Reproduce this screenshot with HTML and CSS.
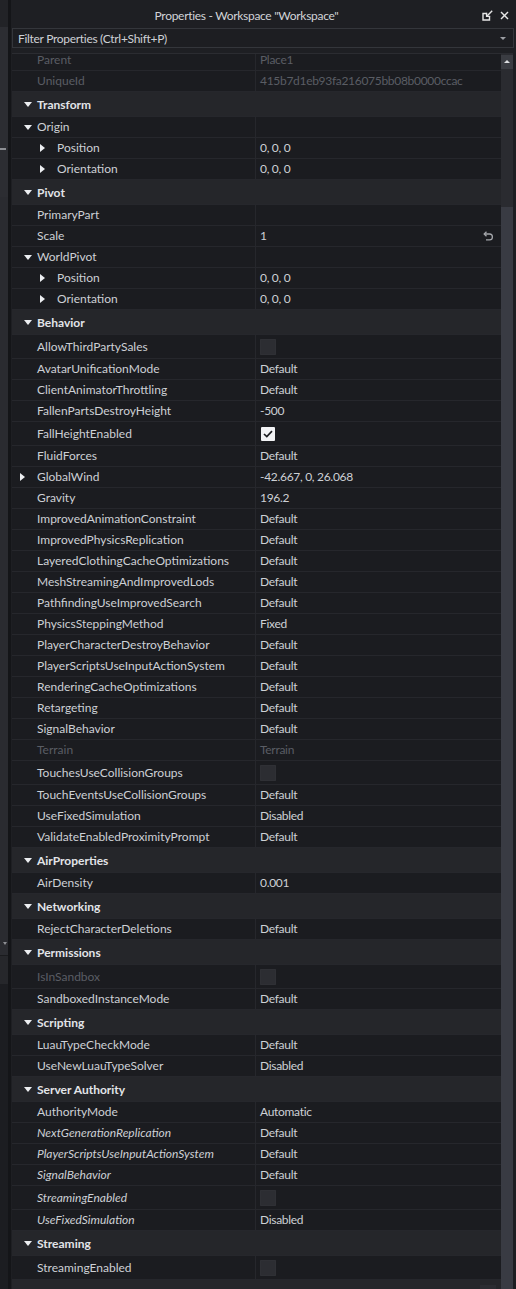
FILE: index.html
```html
<!DOCTYPE html>
<html lang="en">
<head>
  <meta charset="UTF-8" />
  <title>Properties</title>
  <link rel="stylesheet" href="styles.css">
</head>
<body>
  <div class="app">
    <!-- edge of the neighbouring dock panel -->
    <div class="side">
      <div class="side-top"></div>
      <div class="side-box"><span class="side-mark"></span></div>
      <div class="side-mid"><span class="side-arrow"></span></div>
      <div class="side-band"></div>
      <div class="side-rest"></div>
    </div>
    <div class="divider"></div>

    <div class="panel">
      <div class="titlebar">
        <span class="title">Properties - Workspace "Workspace"</span>
        <div class="title-btns">
          <svg width="11" height="11" viewBox="0 0 11 11" fill="none" stroke="#e6e6e6" stroke-width="1.4">
            <polyline points="4.5,3.5 1,3.5 1,10 7.5,10 7.5,6.5" />
            <line x1="10.2" y1="0.8" x2="4.6" y2="6.4" />
            <polyline points="4.6,2.8 4.6,6.4 8.2,6.4" />
          </svg>
          <svg width="9" height="9" viewBox="0 0 9 9" stroke="#e6e6e6" stroke-width="1.4">
            <line x1="1" y1="1" x2="8" y2="8" />
            <line x1="8" y1="1" x2="1" y2="8" />
          </svg>
        </div>
      </div>

      <div class="filter">
        <span>Filter Properties (Ctrl+Shift+P)</span>
        <span class="drop"></span>
      </div>

      <div class="body">
        <div class="grid">
          <div class="list">
            <div class="row off"><div class="name">Parent</div><div class="val">Place1</div></div>
            <div class="row off"><div class="name">UniqueId</div><div class="val">415b7d1eb93fa216075bb08b0000ccac</div></div>

            <div class="cat"><span class="caret down"></span>Transform</div>
            <div class="row"><div class="name"><span class="caret down"></span>Origin</div><div class="val"></div></div>
            <div class="row"><div class="name sub"><span class="caret right"></span>Position</div><div class="val">0, 0, 0</div></div>
            <div class="row"><div class="name sub"><span class="caret right"></span>Orientation</div><div class="val">0, 0, 0</div></div>

            <div class="cat"><span class="caret down"></span>Pivot</div>
            <div class="row"><div class="name">PrimaryPart</div><div class="val"></div></div>
            <div class="row">
              <div class="name">Scale</div>
              <div class="val">1
                <svg class="reset" width="11" height="10" viewBox="0 0 11 10" fill="none" stroke="#a4a6ab" stroke-width="1.3">
                  <polyline points="3.5,0.8 1.2,3 3.5,5.2" />
                  <path d="M1.2 3 H6.5 A2.9 2.9 0 0 1 6.5 8.8 H3" />
                </svg>
              </div>
            </div>
            <div class="row"><div class="name"><span class="caret down"></span>WorldPivot</div><div class="val"></div></div>
            <div class="row"><div class="name sub"><span class="caret right"></span>Position</div><div class="val">0, 0, 0</div></div>
            <div class="row"><div class="name sub"><span class="caret right"></span>Orientation</div><div class="val">0, 0, 0</div></div>

            <div class="cat"><span class="caret down"></span>Behavior</div>
            <div class="row tall"><div class="name">AllowThirdPartySales</div><div class="val"><span class="box"></span></div></div>
            <div class="row"><div class="name">AvatarUnificationMode</div><div class="val">Default</div></div>
            <div class="row"><div class="name">ClientAnimatorThrottling</div><div class="val">Default</div></div>
            <div class="row"><div class="name">FallenPartsDestroyHeight</div><div class="val">-500</div></div>
            <div class="row tall">
              <div class="name">FallHeightEnabled</div>
              <div class="val">
                <span class="box on">
                  <svg width="10" height="8" viewBox="0 0 10 8" fill="none" stroke="#1b1c20" stroke-width="1.7">
                    <polyline points="1,4 3.8,6.6 9,1.2" />
                  </svg>
                </span>
              </div>
            </div>
            <div class="row"><div class="name">FluidForces</div><div class="val">Default</div></div>
            <div class="row"><div class="name"><span class="caret right"></span>GlobalWind</div><div class="val">-42.667, 0, 26.068</div></div>
            <div class="row"><div class="name">Gravity</div><div class="val">196.2</div></div>
            <div class="row"><div class="name">ImprovedAnimationConstraint</div><div class="val">Default</div></div>
            <div class="row"><div class="name">ImprovedPhysicsReplication</div><div class="val">Default</div></div>
            <div class="row"><div class="name">LayeredClothingCacheOptimizations</div><div class="val">Default</div></div>
            <div class="row"><div class="name">MeshStreamingAndImprovedLods</div><div class="val">Default</div></div>
            <div class="row"><div class="name">PathfindingUseImprovedSearch</div><div class="val">Default</div></div>
            <div class="row"><div class="name">PhysicsSteppingMethod</div><div class="val">Fixed</div></div>
            <div class="row"><div class="name">PlayerCharacterDestroyBehavior</div><div class="val">Default</div></div>
            <div class="row"><div class="name">PlayerScriptsUseInputActionSystem</div><div class="val">Default</div></div>
            <div class="row"><div class="name">RenderingCacheOptimizations</div><div class="val">Default</div></div>
            <div class="row"><div class="name">Retargeting</div><div class="val">Default</div></div>
            <div class="row"><div class="name">SignalBehavior</div><div class="val">Default</div></div>
            <div class="row off"><div class="name">Terrain</div><div class="val">Terrain</div></div>
            <div class="row tall"><div class="name">TouchesUseCollisionGroups</div><div class="val"><span class="box"></span></div></div>
            <div class="row"><div class="name">TouchEventsUseCollisionGroups</div><div class="val">Default</div></div>
            <div class="row"><div class="name">UseFixedSimulation</div><div class="val">Disabled</div></div>
            <div class="row"><div class="name">ValidateEnabledProximityPrompt</div><div class="val">Default</div></div>

            <div class="cat"><span class="caret down"></span>AirProperties</div>
            <div class="row"><div class="name">AirDensity</div><div class="val">0.001</div></div>

            <div class="cat"><span class="caret down"></span>Networking</div>
            <div class="row"><div class="name">RejectCharacterDeletions</div><div class="val">Default</div></div>

            <div class="cat"><span class="caret down"></span>Permissions</div>
            <div class="row tall off"><div class="name">IsInSandbox</div><div class="val"><span class="box"></span></div></div>
            <div class="row"><div class="name">SandboxedInstanceMode</div><div class="val">Default</div></div>

            <div class="cat"><span class="caret down"></span>Scripting</div>
            <div class="row"><div class="name">LuauTypeCheckMode</div><div class="val">Default</div></div>
            <div class="row"><div class="name">UseNewLuauTypeSolver</div><div class="val">Disabled</div></div>

            <div class="cat"><span class="caret down"></span>Server Authority</div>
            <div class="row"><div class="name">AuthorityMode</div><div class="val">Automatic</div></div>
            <div class="row"><div class="name it">NextGenerationReplication</div><div class="val">Default</div></div>
            <div class="row"><div class="name it">PlayerScriptsUseInputActionSystem</div><div class="val">Default</div></div>
            <div class="row"><div class="name it">SignalBehavior</div><div class="val">Default</div></div>
            <div class="row tall"><div class="name it">StreamingEnabled</div><div class="val"><span class="box"></span></div></div>
            <div class="row"><div class="name it">UseFixedSimulation</div><div class="val">Disabled</div></div>

            <div class="cat"><span class="caret down"></span>Streaming</div>
            <div class="row tall"><div class="name">StreamingEnabled</div><div class="val"><span class="box"></span></div></div>

            <div class="cat"><span class="caret down"></span>Tags<span class="add">+</span></div>
          </div>
        </div>
        <div class="scrollbar">
          <div class="sb-up"></div>
          <div class="sb-track"></div>
          <div class="sb-thumb"></div>
        </div>
        <div class="edge"></div>
      </div>
    </div>
  </div>
</body>
</html>
```
FILE: styles.css
```css
html, body { margin: 0; padding: 0; background: #1e1f23; }
body { font-family: Lato, "Noto Sans", sans-serif; font-size: 12px; color: #cdd0d5; }

.app { display: flex; height: 1289px; overflow: hidden; }

/* neighbouring panel edge */
.side { width: 8px; display: flex; flex-direction: column; }
.side-top { height: 27px; background: #222327; }
.side-box { height: 170px; background: #2c2d32; display: flex; flex-direction: column; }
.side-mark { height: 2px; width: 6px; background: #8d8f94; margin-top: 121px; }
.side-mid { height: 758px; background: #2a2b30; display: flex; align-items: flex-end; }
.side-arrow { width: 0; height: 0; border-left: 2px solid transparent; border-right: 2px solid transparent; border-top: 3px solid #8d8f94; margin: 0 0 10px 3px; }
.side-band { height: 28px; background: #26272b; border-top: 1px solid #1a1b1e; }
.side-rest { flex: 1; background: #1c1d21; }
.divider { width: 3px; background: #141518; }

.panel { flex: 1; min-width: 0; display: flex; flex-direction: column; background: #1e1f23; }

.titlebar { height: 26px; padding-top: 2px; display: flex; align-items: center; }
.title { flex: 1; text-align: center; color: #d2d4d8; letter-spacing: -0.3px; }
.title-btns { width: 34px; display: flex; align-items: center; gap: 7px; }

.filter { height: 18px; margin: 0 2px 5px 1px; border: 1px solid #34363b; background: #1d1e22; display: flex; align-items: center; padding-left: 5px; color: #cdd0d5; letter-spacing: -0.3px; }
.filter .drop { margin-left: auto; margin-right: 7px; width: 0; height: 0; border-left: 3px solid transparent; border-right: 3px solid transparent; border-top: 3px solid #9c9ea3; }

.body { flex: 1; min-height: 0; display: flex; }
.grid { flex: 1; margin-left: 1px; overflow: hidden; border-top: 1px solid #2b2c31; background: #1b1c20; }
.list { margin-top: -4px; }

.row { display: grid; grid-template-columns: 244px 1fr; height: 21px; border-bottom: 1px solid #26272c; box-sizing: border-box; line-height: 20px; }
.row.tall { height: 24px; line-height: 23px; }
.name { display: flex; padding-left: 25px; border-right: 1px solid #26272c; white-space: nowrap; overflow: hidden; }
.name.sub { padding-left: 45px; }
.name.it { font-style: italic; }
.val { padding-left: 4px; display: flex; align-items: center; white-space: nowrap; letter-spacing: -0.3px; }
.row.off .name, .row.off .val { color: #5a5d64; }

.cat { height: 25px; line-height: 25px; background: #25262a; border-bottom: 1px solid #26272c; box-sizing: border-box; padding-left: 25px; font-weight: bold; color: #e2e4e8; display: flex; }

/* expand / collapse triangles */
.caret { flex: none; width: 19px; margin-left: -19px; position: relative; }
.name.sub .caret { width: 17px; margin-left: -17px; }
.caret::before { content: ""; position: absolute; top: 50%; }
.caret.down::before { left: 6px; margin-top: -2px; border-left: 4px solid transparent; border-right: 4px solid transparent; border-top: 5px solid #eceef1; }
.caret.right::before { left: 2px; margin-top: -4px; border-top: 4px solid transparent; border-bottom: 4px solid transparent; border-left: 5px solid #eceef1; }
.name.sub .caret.right::before { left: 0; }

.reset { margin-left: auto; margin-right: 7px; }

.box { width: 16px; height: 16px; background: #2c2d32; border-radius: 1px; box-shadow: inset 0 0 0 1px #2f3035; display: flex; align-items: center; justify-content: center; }
.box.on { width: 14px; height: 14px; margin-left: 1px; background: #f2f3f5; box-shadow: none; }

.add { margin-left: auto; margin-right: 5px; margin-top: 5px; width: 16px; height: 16px; background: #2b2c31; color: #c9cbd0; font-weight: normal; font-size: 16px; line-height: 15px; text-align: center; }

.scrollbar { width: 12px; display: flex; flex-direction: column; background: #2a2b30; }
.sb-up { height: 14px; margin-top: 2px; background: #3a3c42; position: relative; }
.sb-up::before { content: ""; position: absolute; left: 3px; top: 5px; border-left: 3px solid transparent; border-right: 3px solid transparent; border-bottom: 3px solid #dcdde0; }
.sb-track { height: 138px; }
.sb-thumb { flex: 1; background: #393b43; }
.edge { width: 3px; background: #1d1e22; }
```
